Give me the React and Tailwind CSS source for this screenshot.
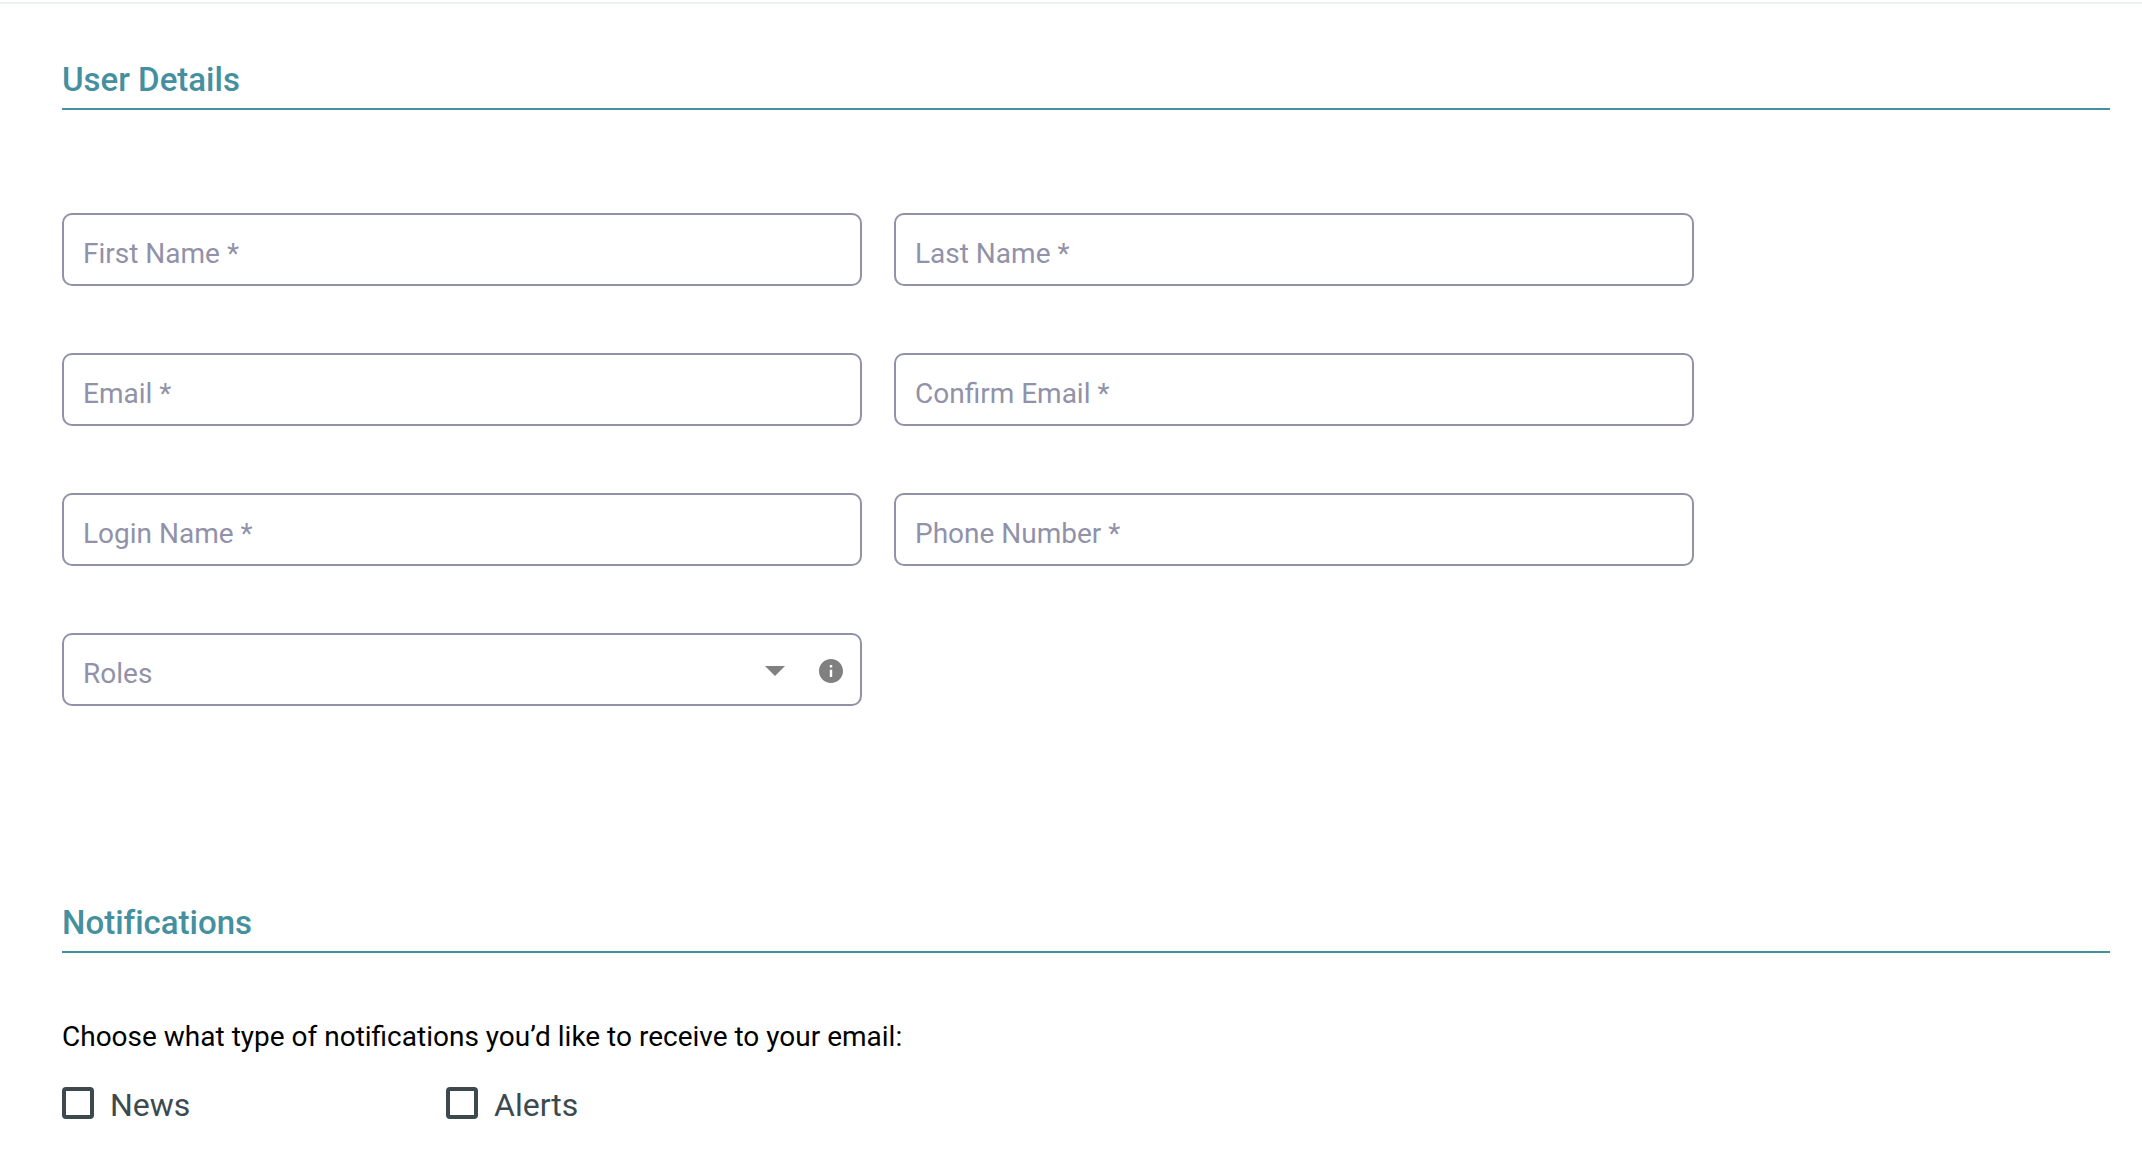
import React, { useState } from 'react'

const FIELDS = [
    { id: 'firstName', label: 'First Name *', type: 'text' },
    { id: 'lastName', label: 'Last Name *', type: 'text' },
    { id: 'email', label: 'Email *', type: 'email' },
    { id: 'confirmEmail', label: 'Confirm Email *', type: 'email' },
    { id: 'loginName', label: 'Login Name *', type: 'text' },
    { id: 'phone', label: 'Phone Number *', type: 'tel' },
]

const NOTIFICATIONS = [
    { id: 'news', label: 'News' },
    { id: 'alerts', label: 'Alerts' },
]

function SectionTitle({ children }) {
    return (
        <h2 className="border-b-2 border-[#45909f] pb-2 text-[33px] leading-[40px] font-medium text-[#45909f] [font-variant-ligatures:none]">
            {children}
        </h2>
    )
}

// Outlined box with a label that gets out of the way once there is a value
function TextField({ id, label, type, value, onChange }) {
    return (
        <div className="relative h-[73px]">
            <input
                id={id}
                type={type}
                value={value}
                onChange={(e) => onChange(id, e.target.value)}
                className="h-full w-full rounded-[10px] border-2 border-[#9192a9] bg-white px-5 text-[28px] text-gray-800 outline-none focus:border-[#45909f]"
            />
            {!value && (
                <label htmlFor={id} className="pointer-events-none absolute inset-x-[21px] top-[25px] text-[28px] leading-[32px] text-[#9192a9]">
                    {label}
                </label>
            )}
        </div>
    )
}

function RolesField({ value, onChange }) {
    return (
        <div className="relative h-[73px]">
            <select
                id="roles"
                value={value}
                onChange={(e) => onChange('roles', e.target.value)}
                className="h-full w-full appearance-none rounded-[10px] border-2 border-[#9192a9] bg-white px-5 text-[28px] text-gray-800 outline-none focus:border-[#45909f]"
            >
                <option value=""></option>
                <option value="admin">Admin</option>
                <option value="user">User</option>
            </select>
            {!value && (
                <label htmlFor="roles" className="pointer-events-none absolute left-[21px] top-[25px] text-[28px] leading-[32px] text-[#9192a9]">
                    Roles
                </label>
            )}
            <div className="pointer-events-none absolute inset-y-0 right-[19px] flex items-center gap-[34px] pt-0.5">
                <svg viewBox="0 0 20 10" className="h-[10px] w-5 fill-[#808080]" aria-hidden="true">
                    <path d="M0 0h20L10 10z" />
                </svg>
                <button type="button" aria-label="About roles" className="pointer-events-auto">
                    <svg viewBox="2 2 20 20" className="block size-6 fill-[#808080]">
                        <path d="M12 2C6.48 2 2 6.48 2 12s4.48 10 10 10 10-4.48 10-10S17.52 2 12 2zm1 15h-2v-6h2v6zm0-8h-2V7h2v2z" />
                    </svg>
                </button>
            </div>
        </div>
    )
}

export default function App() {
    const [values, setValues] = useState({})
    const [checked, setChecked] = useState({})

    function handleChange(id, value) {
        setValues((prev) => ({ ...prev, [id]: value }))
    }

    function toggle(id) {
        setChecked((prev) => ({ ...prev, [id]: !prev[id] }))
    }

    return (
        <div className="bg-white pt-0.5 font-[Roboto,sans-serif]">
            <form className="border-t-2 border-[#eaf2f2] pt-14 pr-8 pb-8 pl-[62px]">
                <section>
                    <SectionTitle>User Details</SectionTitle>
                    <div className="mt-[103px] grid max-w-[1632px] grid-cols-2 gap-x-8 gap-y-[67px]">
                        {FIELDS.map((f) => (
                            <TextField key={f.id} {...f} value={values[f.id] || ''} onChange={handleChange} />
                        ))}
                        <RolesField value={values.roles || ''} onChange={handleChange} />
                    </div>
                </section>

                <section className="mt-[197px]">
                    <SectionTitle>Notifications</SectionTitle>
                    <fieldset className="mt-[68px]">
                        <legend className="text-[28px] leading-[32px] text-black">
                            Choose what type of notifications you’d like to receive to your email:
                        </legend>
                        <div className="mt-7 flex">
                            {NOTIFICATIONS.map((n) => (
                                <label key={n.id} className="flex w-96 items-center gap-4 text-[32px] leading-[40px] text-[#3c4a4f]">
                                    <input
                                        type="checkbox"
                                        checked={!!checked[n.id]}
                                        onChange={() => toggle(n.id)}
                                        className="size-8 appearance-none rounded border-4 border-[#3c4a4f] checked:bg-[#3c4a4f]"
                                    />
                                    <span className="pt-1">{n.label}</span>
                                </label>
                            ))}
                        </div>
                    </fieldset>
                </section>
            </form>
        </div>
    )
}
